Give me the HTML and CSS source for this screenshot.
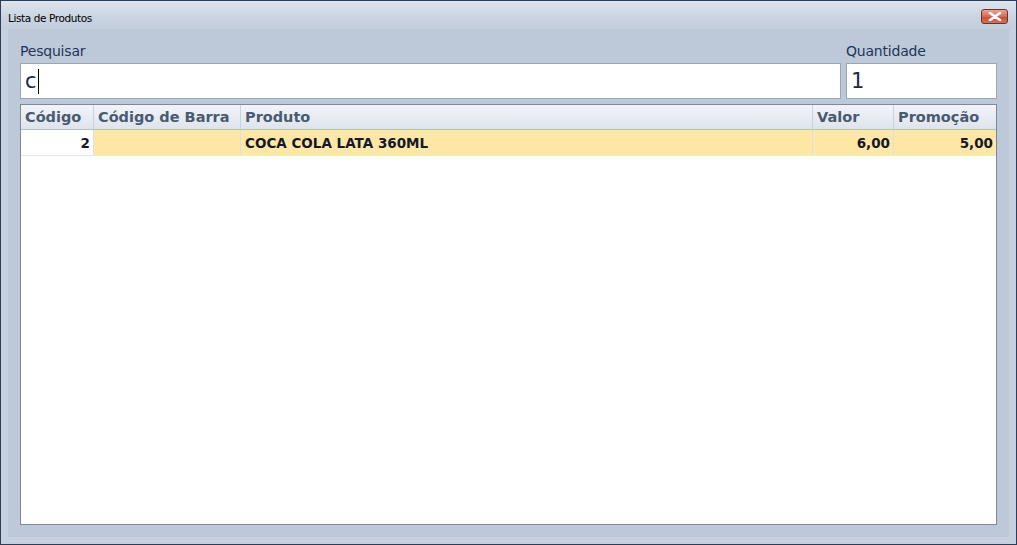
FILE: index.html
```html
<!DOCTYPE html>
<html>
<head>
<meta charset="utf-8">
<link rel="stylesheet" href="styles.css">
</head>
<body>
<div class="window">
  <div class="titlebar">
    <span class="title">Lista de Produtos</span>
    <span class="close"><svg width="14" height="9" viewBox="0 0 14 9"><path d="M2 1 L12 8 M12 1 L2 8" stroke="#fff" stroke-width="2.6" stroke-linecap="round"/></svg></span>
  </div>
  <div class="client">
    <div class="fields">
      <div class="field search">
        <label class="lbl">Pesquisar</label>
        <div class="input"><span class="val">c</span><span class="caret"></span></div>
      </div>
      <div class="field qty">
        <label class="lbl">Quantidade</label>
        <div class="input"><span class="val">1</span></div>
      </div>
    </div>
    <div class="grid">
      <div class="row head">
        <div class="c c1">Código</div>
        <div class="c c2">Código de Barra</div>
        <div class="c c3">Produto</div>
        <div class="c c4">Valor</div>
        <div class="c c5">Promoção</div>
      </div>
      <div class="row data">
        <div class="c c1 num white">2</div>
        <div class="c c2"></div>
        <div class="c c3">COCA COLA LATA 360ML</div>
        <div class="c c4 num">6,00</div>
        <div class="c c5 num">5,00</div>
      </div>
    </div>
  </div>
</div>
</body>
</html>
```
FILE: styles.css
```css
html, body { margin: 0; padding: 0; }
body { width: 1017px; height: 545px; overflow: hidden; font-family: "DejaVu Sans", sans-serif; }
.window {
  width: 1017px; height: 545px; box-sizing: border-box;
  border: 1px solid #2e3d57;
  background: #c6d0de;
  display: flex; flex-direction: column;
}
.titlebar {
  height: 28px; flex: none;
  background: linear-gradient(#dde4ee, #c9d3e1 60%, #c3cddc);
  display: flex; align-items: center; justify-content: space-between;
  padding: 0 8px 0 7px;
}
.title { font-size: 10.5px; color: #000; letter-spacing: -0.4px; margin-top: 6px; }
.close {
  width: 27px; height: 15px; box-sizing: border-box;
  border: 1px solid #7a2b22; border-radius: 3px;
  background: linear-gradient(#e8a296, #d56a57 50%, #c24a36 51%, #d4725e);
  display: flex; align-items: center; justify-content: center;
  margin-top: 2px;
}
.client {
  flex: 1; margin: 0 7px 7px 7px;
  background: #bdc9d9;
  padding: 12px 12px 12px 12px;
  display: flex; flex-direction: column;
}
.fields { display: flex; gap: 5px; }
.field { display: flex; flex-direction: column; }
.search { flex: 1; }
.qty { width: 151px; }
.lbl { font-size: 14px; color: #1e3559; height: 22px; line-height: 20px; letter-spacing: -0.2px; }
.input {
  height: 36px; box-sizing: border-box; background: #fff;
  border: 1px solid #9aa5b5;
  display: flex; align-items: center; padding-left: 4px;
  font-size: 21px; color: #1a2a48;
}
.caret { width: 1px; height: 25px; background: #000; margin-left: 1px; }
.grid {
  margin-top: 5px; flex: 1; background: #fff;
  border: 1px solid #7d889a;
}
.row { display: flex; height: 25px; }
.head { background: linear-gradient(#f1f4f8, #dfe4ec); border-bottom: 1px solid #b4bfce; height: 24px; }
.c { box-sizing: border-box; border-right: 1px solid #c9d2de; padding: 0 4px; display: flex; align-items: center; white-space: nowrap; overflow: hidden; }
.head .c { font-weight: bold; font-size: 14.5px; color: #495a72; }
.c1 { width: 73px; }
.c2 { width: 147px; }
.c3 { flex: 1; }
.c4 { width: 81px; }
.c5 { width: 102px; border-right: none; }
.data { background: #ffe7a5; border-bottom: 1px solid #e4e8ee; }
.data .c { font-weight: bold; font-size: 13.5px; color: #14182a; border-right-color: #d9dfe8; }
.num { justify-content: flex-end; padding-right: 3px; }
.white { background: #fff; }
```
